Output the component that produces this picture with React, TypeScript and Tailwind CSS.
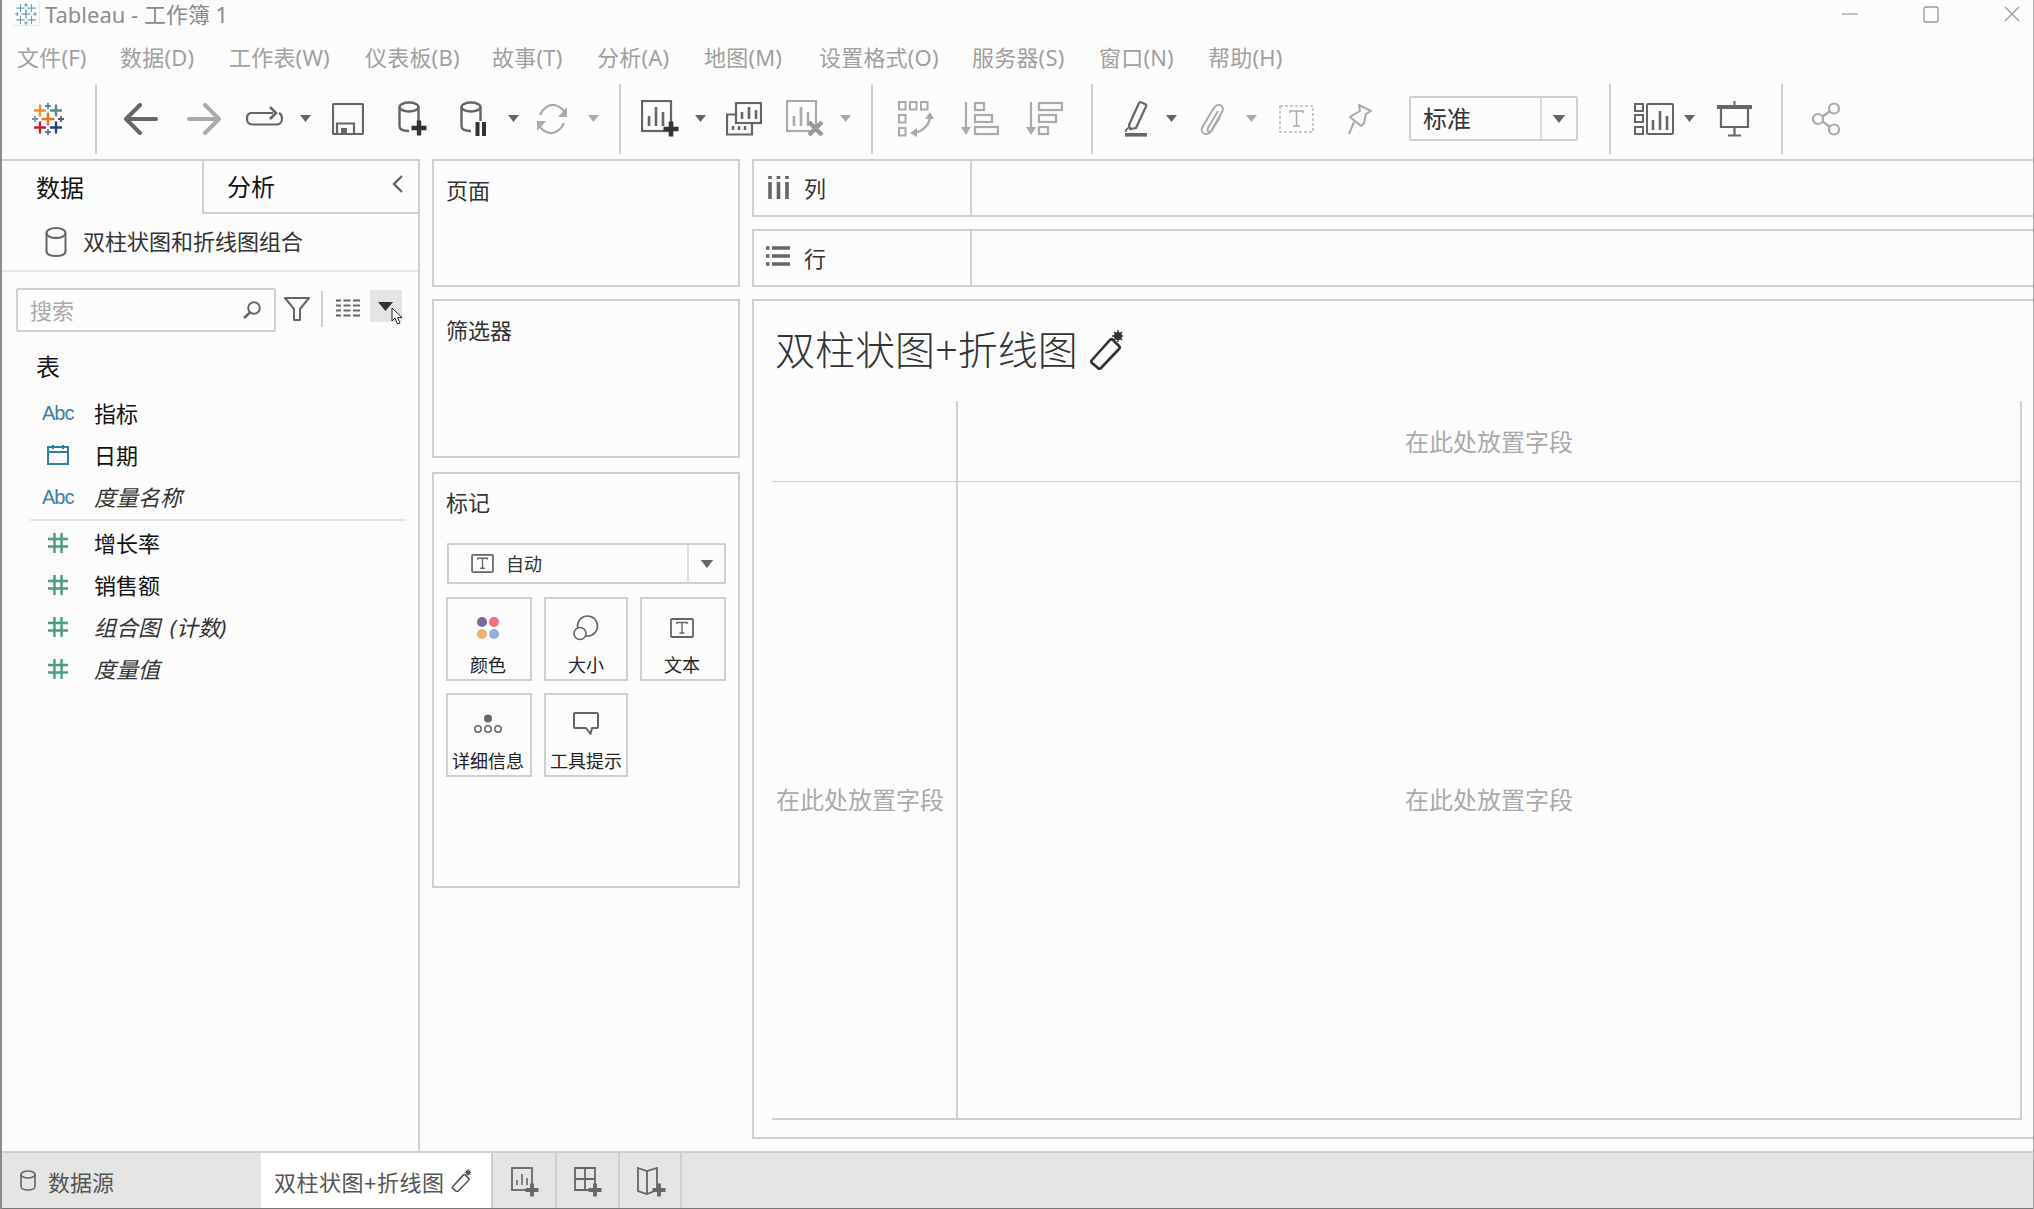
import React from "react";

const G = "#666666";
const L = "#aaaaaa";

function cross(x: number, y: number, a: number) {
  return `M${x - a} ${y}H${x + a}M${x} ${y - a}V${y + a}`;
}

function Logo({ size, mono }: { size: number; mono?: boolean }) {
  const items: [number, number, number, string, number][] = [
    [16, 16, 6.5, "#e8762c", 2.6],
    [8, 7.5, 6, "#f28e2b", 2.4],
    [24, 7.5, 6, "#5b879b", 2.4],
    [8, 24.5, 6, "#c72035", 2.4],
    [24, 24.5, 6, "#1f447a", 2.4],
    [16, 3, 3, "#5b879b", 1.8],
    [16, 29, 3, "#5f6f9f", 1.8],
    [3, 16, 3, "#7099a6", 1.8],
    [29, 16, 3, "#59597f", 1.8],
  ];
  return (
    <svg width={size} height={size} viewBox="0 0 32 32" fill="none" className="shrink-0">
      {items.map(([x, y, a, c, w], i) => (
        <path key={i} d={cross(x, y, a)} stroke={mono ? (i === 0 || i > 4 ? "#4d86ab" : "#6d9dbd") : c} strokeWidth={mono ? w * 0.65 : w} />
      ))}
    </svg>
  );
}

function Caret({ c = G, cls = "" }: { c?: string; cls?: string }) {
  return (
    <svg width="11" height="7" viewBox="0 0 11 7" className={cls}>
      <path d="M0 0H11L5.5 7Z" fill={c} />
    </svg>
  );
}

function Div({ cls }: { cls: string }) {
  return <div className={`h-[70px] w-[2px] bg-[#cfcfcf] shrink-0 ${cls}`} />;
}

function Cylinder({ c = G, w = 2.4 }: { c?: string; w?: number }) {
  return (
    <g fill="none" stroke={c} strokeWidth={w}>
      <ellipse cx="11" cy="6" rx="9.5" ry="4.5" />
      <path d="M1.5 6V25C1.5 28 5 30 11 30M20.5 6V20" />
    </g>
  );
}

function Bars({ x, y, c }: { x: number; y: number; c: string }) {
  return (
    <path d={`M${x} ${y + 19}V${y + 9}M${x + 7} ${y + 19}V${y}M${x + 14} ${y + 19}V${y + 5}`} stroke={c} strokeWidth="2.6" fill="none" />
  );
}

function Chevron() {
  return (
    <svg width="12" height="20" viewBox="0 0 12 20" fill="none" className="shrink-0">
      <path d="M10 2L2 10L10 18" stroke={G} strokeWidth="2.4" />
    </svg>
  );
}

function Pen({ size = 34, c = "#333333" }: { size?: number; c?: string }) {
  return (
    <svg width={size} height={(size * 40) / 34} viewBox="0 0 34 40" fill="none" className="shrink-0">
      <path d="M3 30L21 10C22 9 23 9 24 10L30 16C31 17 31 18 30 19L12 38C11 39 10 39 9 38L3 33C2 32 2 31 3 30Z" stroke={c} strokeWidth="2.6" />
      <circle cx="29" cy="6" r="4" fill={c} />
      <path d="M29 0V12M23 6H35M25 2L33 10M33 2L25 10" stroke={c} strokeWidth="1.4" />
    </svg>
  );
}

function Hash() {
  return (
    <svg width="20" height="20" viewBox="0 0 20 20" className="shrink-0">
      <path d="M0 6H20M0 13.5H20M6.5 0V20M13.5 0V20" stroke="#4a9e7d" strokeWidth="2.4" />
    </svg>
  );
}

function Abc() {
  return <span className="w-[33px] text-[20px] tracking-[-1px] text-[#3d7fa3] font-['Liberation_Sans',sans-serif] leading-none">Abc</span>;
}

function Cal() {
  return (
    <svg width="22" height="20" viewBox="0 0 22 20" fill="none" className="shrink-0 ml-[5px]">
      <rect x="1" y="2" width="20" height="17" stroke="#2f7fa0" strokeWidth="2" />
      <path d="M1 7H21" stroke="#2f7fa0" strokeWidth="2" />
      <path d="M6 0V4M16 0V4" stroke="#2f7fa0" strokeWidth="2" />
    </svg>
  );
}

function Field({ icon, text, italic }: { icon: React.ReactNode; text: string; italic?: boolean }) {
  return (
    <div className="h-[42px] flex items-center pl-[40px] shrink-0">
      <div className="w-[52px] flex items-center">{icon}</div>
      <span className={`text-[22px] leading-none ${italic ? "italic text-[#333333] [word-spacing:4px]" : "text-[#111111]"}`}>{text}</span>
    </div>
  );
}

function Mark({ icon, label, cls }: { icon: React.ReactNode; label: string; cls: string }) {
  return (
    <div className={`h-[84px] border-2 border-[#cfcfcf] flex flex-col items-center shrink-0 ${cls}`}>
      <div className="h-[57px] flex items-center justify-center">{icon}</div>
      <span className="text-[18px] leading-none text-[#222222] whitespace-nowrap">{label}</span>
    </div>
  );
}

function TBox({ w, h }: { w: number; h: number }) {
  return (
    <svg width={w} height={h} viewBox="0 0 24 20" fill="none" className="shrink-0">
      <rect x="1" y="1" width="22" height="18" rx="1" stroke={G} strokeWidth="1.8" />
      <path d="M7 6V4.5H17V6M12 4.5V15M9.5 15H14.5" stroke={G} strokeWidth="1.4" />
    </svg>
  );
}

function Drop({ cls, text = "在此处放置字段" }: { cls: string; text?: string }) {
  return <div className={`flex items-center justify-center text-[24px] text-[#aaaaaa] ${cls}`}>{text}</div>;
}

const menu: [string, string][] = [
  ["文件(F)", "w-[103px]"],
  ["数据(D)", "w-[109px]"],
  ["工作表(W)", "w-[136px]"],
  ["仪表板(B)", "w-[127px]"],
  ["故事(T)", "w-[105px]"],
  ["分析(A)", "w-[107px]"],
  ["地图(M)", "w-[115px]"],
  ["设置格式(O)", "w-[153px]"],
  ["服务器(S)", "w-[127px]"],
  ["窗口(N)", "w-[109px]"],
  ["帮助(H)", "w-[110px]"],
];

export default function App() {
  return (
    <div className="w-[2034px] h-[1209px] overflow-hidden flex flex-col bg-[#fcfcfc] border-l-2 border-l-[#8a8a8a] border-r border-r-[#aaaaaa] font-['Noto_Sans','Noto_Sans_CJK_SC',sans-serif]">
      {/* title bar */}
      <div className="h-[28px] flex items-center shrink-0">
        <div className="ml-[11px] w-[27px] h-[24px] border-r border-b border-[#e8e8e8] flex items-center justify-center">
          <Logo size={22} mono />
        </div>
        <span className="ml-[5px] text-[22px] leading-none text-[#8c8c8c] whitespace-nowrap">Tableau - 工作簿 1</span>
        <svg width="16" height="2" viewBox="0 0 16 2" className="ml-auto">
          <path d="M0 1H16" stroke="#999999" strokeWidth="1.2" />
        </svg>
        <svg width="16" height="17" viewBox="0 0 16 17" fill="none" className="ml-[65px]">
          <rect x="1" y="1" width="14" height="15" rx="1.5" stroke="#999999" strokeWidth="1.3" />
        </svg>
        <svg width="16" height="16" viewBox="0 0 16 16" fill="none" className="ml-[65px] mr-[13px]">
          <path d="M1 1L15 15M15 1L1 15" stroke="#999999" strokeWidth="1.2" />
        </svg>
      </div>

      {/* menu */}
      <div className="h-[52px] pt-[7px] pl-[15px] flex items-start shrink-0">
        {menu.map(([t, w]) => (
          <div key={t} className={`${w} h-[44px] flex items-center text-[22px] tracking-[0.2px] leading-none text-[#a0a0a0] whitespace-nowrap`}>
            {t}
          </div>
        ))}
      </div>

      {/* toolbar */}
      <div className="h-[79px] pb-[2px] flex items-center shrink-0">
        <div className="ml-[30px]">
          <Logo size={32} />
        </div>
        <Div cls="ml-[31px]" />
        <svg width="35" height="32" viewBox="0 0 35 32" fill="none" className="ml-[26px]">
          <path d="M33 16H4M17 2L3 16L17 30" stroke={G} strokeWidth="4" strokeLinecap="round" strokeLinejoin="round" />
        </svg>
        <svg width="35" height="32" viewBox="0 0 35 32" fill="none" className="ml-[29px]">
          <path d="M2 16H31M18 2L32 16L18 30" stroke={L} strokeWidth="4" strokeLinecap="round" strokeLinejoin="round" />
        </svg>
        <svg width="38" height="20" viewBox="0 0 38 20" fill="none" className="ml-[24px] mb-[6px]">
          <path d="M27 7H6C3 7 1 9 1 12.5C1 16 3 18.5 6 18.5H31C34 18.5 36 16 36 12.5C36 10 35 8 33 7" stroke={G} strokeWidth="2.2" />
          <path d="M24 1L30 7L24 13" stroke={G} strokeWidth="2.6" />
        </svg>
        <Caret cls="ml-[16px]" />
        <svg width="32" height="32" viewBox="0 0 32 32" fill="none" className="ml-[21px]">
          <rect x="1" y="1" width="30" height="30" rx="1" stroke={G} strokeWidth="2.2" />
          <path d="M5 31V20.5H22V31" stroke={G} strokeWidth="2.2" />
          <rect x="9" y="25" width="6" height="6" fill={G} />
        </svg>
        <svg width="30" height="36" viewBox="0 0 30 36" fill="none" className="ml-[34px]">
          <Cylinder />
          <path d={cross(21, 27, 7.5)} stroke="#333333" strokeWidth="4.4" />
        </svg>
        <svg width="30" height="36" viewBox="0 0 30 36" fill="none" className="ml-[32px]">
          <Cylinder />
          <path d="M17.5 21V35M24 21V35" stroke="#333333" strokeWidth="4" />
        </svg>
        <Caret cls="ml-[18px]" />
        <svg width="34" height="32" viewBox="0 0 34 32" fill="none" className="ml-[16px]">
          <path d="M5 12C8 5 14 1.5 19 2C23 2.5 26 4.5 29 8" stroke={L} strokeWidth="2.2" />
          <path d="M32 4V14H23Z" fill={L} />
          <path d="M29 20C26 27 20 30.5 15 30C11 29.5 8 27.5 5 24" stroke={L} strokeWidth="2.2" />
          <path d="M2 28V18H11Z" fill={L} />
        </svg>
        <Caret c={L} cls="ml-[19px]" />
        <Div cls="ml-[20px]" />
        <svg width="38" height="38" viewBox="0 0 38 38" fill="none" className="ml-[20px]">
          <rect x="1" y="1" width="29" height="30" stroke={G} strokeWidth="2.2" />
          <Bars x={8} y={7} c={G} />
          <path d={cross(30, 29, 7.5)} stroke="#333333" strokeWidth="4.6" />
        </svg>
        <Caret cls="ml-[16px]" />
        <svg width="36" height="34" viewBox="0 0 36 34" fill="none" className="ml-[20px]">
          <rect x="10" y="1" width="25" height="20" stroke={G} strokeWidth="2.2" />
          <path d="M16 17V10M23 17V5M30 17V8" stroke={G} strokeWidth="2.6" />
          <path d="M10 12.5H1V32.5H26V21" stroke={G} strokeWidth="2.2" />
          <path d="M7 24V28M13 24V28M19 24V28" stroke={G} strokeWidth="2.4" />
        </svg>
        <svg width="38" height="38" viewBox="0 0 38 38" fill="none" className="ml-[24px]">
          <rect x="1" y="1" width="29" height="30" stroke={L} strokeWidth="2.2" />
          <Bars x={8} y={7} c={L} />
          <path d="M23 22L36 35M36 22L23 35" stroke="#999999" strokeWidth="4.4" />
        </svg>
        <Caret c={L} cls="ml-[16px]" />
        <Div cls="ml-[20px]" />
        <svg width="36" height="36" viewBox="0 0 36 36" fill="none" className="ml-[25px]" stroke={L} strokeWidth="2">
          <rect x="1" y="1" width="6.5" height="7.5" />
          <rect x="12" y="1" width="6.5" height="7.5" />
          <rect x="23" y="1" width="6.5" height="7.5" />
          <rect x="1" y="14" width="6.5" height="7.5" />
          <rect x="1" y="27" width="6.5" height="7.5" />
          <path d="M32 15C32 23 26 30 16 32" strokeWidth="2.4" />
          <path d="M27 18L32 11L36 18Z" fill={L} stroke="none" />
          <path d="M19 27L12 32L19 36Z" fill={L} stroke="none" />
        </svg>
        <svg width="38" height="36" viewBox="0 0 38 36" fill="none" className="ml-[27px]" stroke={L} strokeWidth="2.2">
          <path d="M5 1V28" />
          <path d="M0 26H10L5 34Z" fill={L} stroke="none" />
          <rect x="14" y="2" width="9" height="7" />
          <rect x="14" y="14" width="17" height="7" />
          <rect x="14" y="26" width="23" height="7" />
        </svg>
        <svg width="37" height="36" viewBox="0 0 37 36" fill="none" className="ml-[27px]" stroke={L} strokeWidth="2.2">
          <path d="M5 1V28" />
          <path d="M0 26H10L5 34Z" fill={L} stroke="none" />
          <rect x="13" y="2" width="23" height="7" />
          <rect x="13" y="14" width="17" height="7" />
          <rect x="13" y="26" width="9" height="7" />
        </svg>
        <Div cls="ml-[28px]" />
        <svg width="23" height="36" viewBox="0 0 23 36" fill="none" className="ml-[32px]">
          <path d="M4 24L14 2C14.5 1 15.5 1 16.5 1.5L20 3C21 3.5 21.5 4.5 21 5.5L11 27L5 28Z" stroke={G} strokeWidth="2.2" />
          <path d="M1 29L4 26M1 28V31" stroke={G} strokeWidth="1.6" />
          <rect x="0" y="32" width="22" height="3.6" fill={G} />
        </svg>
        <Caret cls="ml-[18px]" />
        <svg width="26" height="32" viewBox="0 0 26 32" fill="none" className="ml-[23px]">
          <path d="M18 8L8 25C6.5 28 9 30 11 28L22 9C24.5 4.5 20.5 0 16.5 2.5C14 4 13 6 12 8L3 23C0 28 3 31 6 31C9 31 11 29 12.5 26.5L20 14" stroke={L} strokeWidth="2" />
        </svg>
        <Caret c={L} cls="ml-[20px]" />
        <svg width="35" height="28" viewBox="0 0 35 28" fill="none" className="ml-[22px]">
          <rect x="1" y="1" width="33" height="26" stroke="#bbbbbb" strokeWidth="1.6" strokeDasharray="3 2" />
          <path d="M11 8V6H24V8M17.5 6V21M14 21H21" stroke={L} strokeWidth="1.5" />
        </svg>
        <svg width="27" height="32" viewBox="0 0 27 32" fill="none" className="ml-[32px]">
          <path d="M13 2L25 8L20 11L18 20L15 23L4 14L7 12L14 8Z" stroke={L} strokeWidth="2" strokeLinejoin="round" />
          <path d="M8 19L3 31" stroke={L} strokeWidth="2" />
        </svg>
        <div className="ml-[36px] w-[169px] h-[45px] border-2 border-[#cfcfcf] rounded-[2px] flex items-center shrink-0">
          <span className="ml-[12px] w-[117px] text-[24px] leading-none text-[#333333]">标准</span>
          <div className="h-full w-[2px] bg-[#dddddd]" />
          <Caret cls="ml-[10px] w-[14px] h-[8px]" />
        </div>
        <Div cls="ml-[31px]" />
        <svg width="40" height="34" viewBox="0 0 40 34" fill="none" className="ml-[23px]" stroke={G} strokeWidth="2">
          <rect x="1" y="2" width="8" height="7" />
          <rect x="1" y="13" width="8" height="7" />
          <rect x="1" y="25" width="8" height="7" />
          <rect x="13" y="2" width="26" height="30" rx="1" />
          <path d="M19 28V18M26 28V9M33 28V14" strokeWidth="2.6" />
        </svg>
        <Caret cls="ml-[10px]" />
        <svg width="35" height="36" viewBox="0 0 35 36" fill="none" className="ml-[22px]" stroke={G}>
          <path d="M17.5 0V5" strokeWidth="2" />
          <path d="M0 6H35" strokeWidth="4" />
          <path d="M4 7V26H31V7" strokeWidth="2.2" />
          <path d="M17.5 26V34M11 34.5H24" strokeWidth="2.2" />
        </svg>
        <Div cls="ml-[29px]" />
        <svg width="29" height="34" viewBox="0 0 29 34" fill="none" className="ml-[29px]" stroke={L} strokeWidth="2.2">
          <circle cx="6" cy="17" r="5" />
          <circle cx="22" cy="6.5" r="5" />
          <circle cx="22" cy="27.5" r="5" />
          <path d="M10.5 14.5L17.5 9.5M10.5 19.5L17.5 24.5" />
        </svg>
      </div>

      {/* main */}
      <div className="flex-1 flex min-h-0">
        {/* data pane */}
        <div className="w-[418px] shrink-0 border-t-2 border-r-2 border-[#cfcfcf] flex flex-col">
          <div className="h-[53px] flex shrink-0">
            <div className="w-[200px] flex items-center pl-[34px] text-[24px] leading-none text-[#111111]">数据</div>
            <div className="flex-1 border-l-2 border-b-2 border-[#cfcfcf] flex items-center pl-[23px] pr-[14px] justify-between">
              <span className="text-[24px] leading-none text-[#111111]">分析</span>
              <div className="mb-[6px]">
                <Chevron />
              </div>
            </div>
          </div>
          <div className="h-[58px] flex items-center pl-[43px] border-b-2 border-[#e6e6e6] shrink-0">
            <svg width="22" height="30" viewBox="0 0 22 30" fill="none" className="shrink-0">
              <ellipse cx="11" cy="6" rx="9.5" ry="5" stroke={G} strokeWidth="2" />
              <path d="M1.5 6V24C1.5 27 5 29 11 29C17 29 20.5 27 20.5 24V6" stroke={G} strokeWidth="2" />
            </svg>
            <span className="ml-[16px] mb-[2px] text-[22px] leading-none text-[#333333]">双柱状图和折线图组合</span>
          </div>
          <div className="relative mt-[16px] ml-[14px] flex items-center h-[44px] shrink-0">
            <div className="w-[260px] h-[44px] border-2 border-[#cfcfcf] rounded-[2px] flex items-center justify-between pl-[12px] pr-[13px]">
              <span className="text-[22px] leading-none text-[#aaaaaa]">搜索</span>
              <svg width="18" height="18" viewBox="0 0 18 18" fill="none">
                <circle cx="11" cy="7" r="5.8" stroke={G} strokeWidth="2" />
                <path d="M7 11.5L1 17" stroke={G} strokeWidth="2.4" />
              </svg>
            </div>
            <svg width="26" height="24" viewBox="0 0 26 24" fill="none" className="ml-[8px] mb-[2px]">
              <path d="M1 1H25L16 12V23H10V12Z" stroke={G} strokeWidth="2" strokeLinejoin="round" />
            </svg>
            <div className="ml-[11px] w-[2px] h-[36px] bg-[#cfcfcf] mb-[2px]" />
            <svg width="24" height="18" viewBox="0 0 24 18" className="ml-[13px] mb-[4px]">
              <path d="M0 1.5H24M0 6.5H24M0 11.5H24M0 16.5H24" stroke={G} strokeWidth="2" strokeDasharray="5 2.5 7 2.5 7" fill="none" />
            </svg>
            <div className="ml-[10px] w-[32px] h-[32px] bg-[#e5e5e5] rounded-[1px] flex items-center justify-center mb-[8px]">
              <svg width="15" height="9" viewBox="0 0 15 9" className="mr-[2px]">
                <path d="M0 0H15L7.5 9Z" fill="#333333" />
              </svg>
            </div>
            <svg width="13" height="18" viewBox="0 0 13 18" className="absolute left-[375px] top-[19px]">
              <path d="M1 1V14L4 11L6.5 17L9 16L6.5 10.5H11Z" fill="#ffffff" stroke="#222222" strokeWidth="1" />
            </svg>
          </div>
          <div className="mt-[18px] h-[34px] pl-[34px] flex items-center text-[24px] leading-none text-[#111111] shrink-0">表</div>
          <div className="mt-[8px] flex flex-col">
            <Field icon={<Abc />} text="指标" />
            <Field icon={<Cal />} text="日期" />
            <Field icon={<Abc />} text="度量名称" italic />
            <div className="ml-[28px] mr-[12px] h-[2px] my-[1px] bg-[#e4e4e4]" />
            <Field icon={<div className="ml-[6px]"><Hash /></div>} text="增长率" />
            <Field icon={<div className="ml-[6px]"><Hash /></div>} text="销售额" />
            <Field icon={<div className="ml-[6px]"><Hash /></div>} text="组合图 (计数)" italic />
            <Field icon={<div className="ml-[6px]"><Hash /></div>} text="度量值" italic />
          </div>
        </div>

        {/* cards column */}
        <div className="ml-[12px] w-[308px] shrink-0 flex flex-col">
          <div className="h-[128px] border-2 border-[#cfcfcf] pl-[12px] pt-[14px] text-[22px] leading-[30px] text-[#333333] shrink-0">页面</div>
          <div className="mt-[12px] h-[159px] border-2 border-[#cfcfcf] pl-[12px] pt-[14px] text-[22px] leading-[30px] text-[#333333] shrink-0">筛选器</div>
          <div className="mt-[14px] h-[416px] border-2 border-[#cfcfcf] pl-[12px] shrink-0">
            <div className="pt-[13px] h-[69px] text-[22px] leading-[30px] text-[#333333]">标记</div>
            <div className="ml-[1px] w-[279px] h-[41px] border-2 border-[#cfcfcf] rounded-[1px] flex items-center">
              <div className="ml-[22px]">
                <TBox w={23} h={19} />
              </div>
              <span className="ml-[12px] w-[181px] text-[18px] leading-none text-[#333333]">自动</span>
              <div className="h-full w-[2px] bg-[#dddddd]" />
              <Caret cls="ml-[11px] w-[14px] h-[8px]" />
            </div>
            <div className="mt-[13px] flex gap-[12px]">
              <Mark
                cls="w-[86px] pr-[2px]"
                label="颜色"
                icon={
                  <svg width="24" height="24" viewBox="0 0 24 24">
                    <circle cx="6" cy="6" r="5" fill="#7b6a9a" />
                    <circle cx="18" cy="6" r="5" fill="#ef6f7e" />
                    <circle cx="6" cy="18" r="5" fill="#f0b070" />
                    <circle cx="18" cy="18" r="5" fill="#8fb0d8" />
                  </svg>
                }
              />
              <Mark
                cls="w-[84px]"
                label="大小"
                icon={
                  <svg width="26" height="26" viewBox="0 0 26 26" fill="none" stroke={G} strokeWidth="1.6">
                    <circle cx="14.5" cy="11" r="10" />
                    <circle cx="7" cy="18.5" r="6" fill="#fcfcfc" />
                  </svg>
                }
              />
              <Mark cls="w-[86px] pr-[2px]" label="文本" icon={<TBox w={24} h={22} />} />
            </div>
            <div className="mt-[12px] flex gap-[12px]">
              <Mark
                cls="w-[86px] pr-[2px]"
                label="详细信息"
                icon={
                  <svg width="28" height="20" viewBox="0 0 28 20" fill="none" stroke={G} strokeWidth="1.5">
                    <circle cx="14" cy="4.5" r="4" fill={G} stroke="none" />
                    <circle cx="4" cy="15" r="3.2" />
                    <circle cx="14" cy="15" r="3.2" />
                    <circle cx="24" cy="15" r="3.2" />
                  </svg>
                }
              />
              <Mark
                cls="w-[84px]"
                label="工具提示"
                icon={
                  <svg width="26" height="24" viewBox="0 0 26 24" fill="none" stroke={G} strokeWidth="2">
                    <path d="M1 2C1 1.4 1.4 1 2 1H24C24.6 1 25 1.4 25 2V15C25 15.6 24.6 16 24 16H19L17.5 22L13 16H2C1.4 16 1 15.6 1 15Z" strokeLinejoin="round" />
                  </svg>
                }
              />
            </div>
          </div>
        </div>

        {/* shelves & view */}
        <div className="ml-[12px] flex-1 min-w-0 flex flex-col pb-[12px]">
          <div className="h-[58px] border-y-2 border-l-2 border-[#cfcfcf] flex shrink-0">
            <div className="w-[218px] border-r-2 border-[#cfcfcf] flex items-center pl-[14px]">
              <svg width="21" height="23" viewBox="0 0 21 23" className="shrink-0 mb-[2px]">
                <path d="M2 0V3M10.5 0V3M19 0V3" stroke={G} strokeWidth="3.6" />
                <path d="M2 6V23M10.5 6V23M19 6V23" stroke={G} strokeWidth="3.6" />
              </svg>
              <span className="ml-[15px] text-[22px] leading-none text-[#333333]">列</span>
            </div>
          </div>
          <div className="mt-[12px] h-[58px] border-y-2 border-l-2 border-[#cfcfcf] flex shrink-0">
            <div className="w-[218px] border-r-2 border-[#cfcfcf] flex items-center pl-[12px]">
              <svg width="24" height="20" viewBox="0 0 24 20" className="shrink-0 mb-[4px]">
                <path d="M0 2H3.5M0 10H3.5M0 18H3.5" stroke={G} strokeWidth="3.6" />
                <path d="M6 2H24M6 10H24M6 18H24" stroke={G} strokeWidth="3.6" />
              </svg>
              <span className="ml-[14px] text-[22px] leading-none text-[#333333]">行</span>
            </div>
          </div>
          <div className="mt-[12px] h-[840px] border-t-2 border-l-2 border-b-2 border-[#cfcfcf] flex flex-col shrink-0">
            <div className="h-[100px] pb-[3px] flex items-center pl-[21px] shrink-0">
              <span className="text-[40px] leading-none text-[#333333] font-light whitespace-nowrap">双柱状图+折线图</span>
              <div className="ml-[11px]">
                <Pen />
              </div>
            </div>
            <div className="ml-[18px] grid grid-cols-[184px_1066px] grid-rows-[81px_638px]">
              <div className="border-b border-[#cfcfcf]" />
              <Drop cls="border-l-2 border-r-2 border-b border-[#cfcfcf] bg-[#fcfcfc] pt-[2px]" />
              <Drop cls="border-b-2 border-[#cfcfcf] pr-[8px]" />
              <Drop cls="border-l-2 border-r-2 border-b-2 border-[#cfcfcf]" />
            </div>
          </div>
        </div>
      </div>

      {/* tab bar */}
      <div className="h-[58px] shrink-0 border-t-2 border-t-[#cfcfcf] border-b border-b-[#777777] bg-[#e5e5e5] flex">
        <div className="w-[259px] flex items-center pl-[18px]">
          <svg width="16" height="21" viewBox="0 0 16 21" fill="none" className="shrink-0">
            <ellipse cx="8" cy="4.5" rx="7" ry="3.5" stroke={G} strokeWidth="1.6" />
            <path d="M1 4.5V16.5C1 18.5 4 20 8 20C12 20 15 18.5 15 16.5V4.5" stroke={G} strokeWidth="1.6" />
          </svg>
          <span className="ml-[12px] pt-[2px] text-[22px] leading-none text-[#555555]">数据源</span>
        </div>
        <div className="w-[230px] bg-[#ffffff] flex items-center pl-[13px]">
          <span className="pt-[2px] text-[22px] tracking-[0.5px] leading-none text-[#555555] whitespace-nowrap">双柱状图+折线图</span>
          <div className="ml-[6px]">
            <Pen size={20} c="#555555" />
          </div>
        </div>
        <div className="w-[64px] pt-[2px] pl-[3px] border-l-2 border-[#cfcfcf] flex items-center justify-center">
          <svg width="30" height="30" viewBox="0 0 30 30" fill="none">
            <rect x="1" y="1" width="20" height="22" stroke={G} strokeWidth="1.8" />
            <path d="M6 18V13M11 18V7M16 18V11" stroke={G} strokeWidth="1.6" />
            <path d={cross(21, 23, 6.5)} stroke={G} strokeWidth="3.8" />
          </svg>
        </div>
        <div className="w-[63px] pt-[2px] pl-[2px] border-l-2 border-[#cfcfcf] flex items-center justify-center">
          <svg width="30" height="30" viewBox="0 0 30 30" fill="none">
            <path d="M1 1H21V23H1ZM1 12H21M11 1V23" stroke={G} strokeWidth="1.8" />
            <path d={cross(21, 23, 6.5)} stroke={G} strokeWidth="3.8" />
          </svg>
        </div>
        <div className="w-[64px] pt-[2px] pl-[4px] border-x-2 border-[#cfcfcf] flex items-center justify-center">
          <svg width="30" height="30" viewBox="0 0 30 30" fill="none">
            <path d="M1 1L10 4L20 1V23L10 27L1 24ZM10 4V27" stroke={G} strokeWidth="1.8" />
            <path d={cross(22, 23, 6.5)} stroke={G} strokeWidth="3.8" />
          </svg>
        </div>
      </div>
    </div>
  );
}
